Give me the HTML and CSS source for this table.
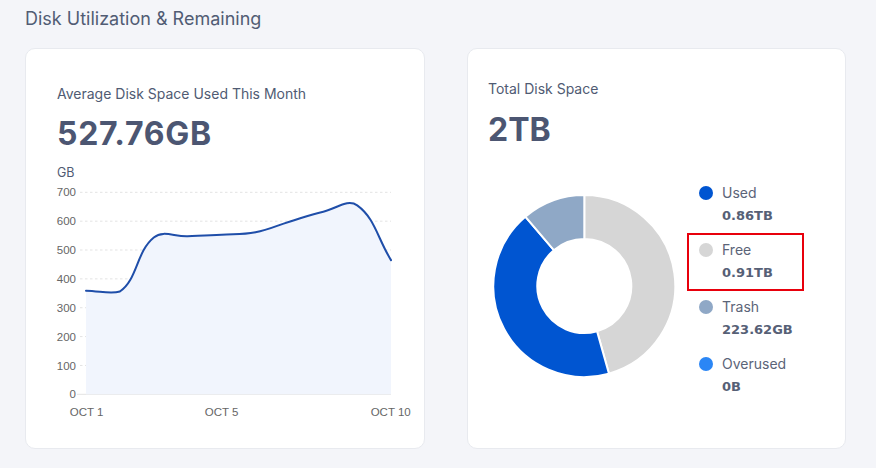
FILE: index.html
```html
<!DOCTYPE html>
<html lang="en">
<head>
<meta charset="utf-8">
<title>Disk Utilization &amp; Remaining</title>
<link rel="stylesheet" href="styles.css">
</head>
<body>
<div class="page">
  <h1 class="section-title">Disk Utilization &amp; Remaining</h1>
  <div class="cards">
    <section class="card card-usage">
      <div class="card-label">Average Disk Space Used This Month</div>
      <div class="card-value">527.76GB</div>
      <svg class="line-chart" width="368" height="270" viewBox="0 0 368 270">
        <text class="unit" x="0" y="17">GB</text>
        <g class="grid">
          <line x1="23" y1="32.3" x2="334" y2="32.3"/>
          <line x1="23" y1="61.16" x2="334" y2="61.16"/>
          <line x1="23" y1="90.01" x2="334" y2="90.01"/>
          <line x1="23" y1="118.87" x2="334" y2="118.87"/>
          <line x1="23" y1="147.73" x2="334" y2="147.73"/>
          <line x1="23" y1="176.59" x2="334" y2="176.59"/>
          <line x1="23" y1="205.44" x2="334" y2="205.44"/>
        </g>
        <line class="zero-tick" x1="20" y1="234.3" x2="334" y2="234.3"/>
        <g class="y-labels">
          <text x="19" y="36.4">700</text>
          <text x="19" y="65.3">600</text>
          <text x="19" y="94.1">500</text>
          <text x="19" y="123">400</text>
          <text x="19" y="151.8">300</text>
          <text x="19" y="180.7">200</text>
          <text x="19" y="209.5">100</text>
          <text x="19" y="238.4">0</text>
        </g>
        <path class="area" d="M29,130.7 C42.56,130.9 53.48,134.5 62.9,131.5 C80.6,119.5 79.1,91.94 96.8,77.5 C106.22,69.82 117.14,76.76 130.7,76.2 C144.26,75.64 151.06,75.48 164.6,74.7 C178.18,73.92 185.24,74.84 198.5,72.3 C212.36,69.64 218.81,65.83 232.4,61.7 C245.93,57.59 252.57,55 266.3,51.7 C279.69,48.48 290.75,38.64 300.2,45.4 C317.83,58 320.48,78.22 334,100.1 L334,234.3 L29,234.3 Z"/>
        <path class="line" d="M29,130.7 C42.56,130.9 53.48,134.5 62.9,131.5 C80.6,119.5 79.1,91.94 96.8,77.5 C106.22,69.82 117.14,76.76 130.7,76.2 C144.26,75.64 151.06,75.48 164.6,74.7 C178.18,73.92 185.24,74.84 198.5,72.3 C212.36,69.64 218.81,65.83 232.4,61.7 C245.93,57.59 252.57,55 266.3,51.7 C279.69,48.48 290.75,38.64 300.2,45.4 C317.83,58 320.48,78.22 334,100.1"/>
        <g class="x-labels">
          <text x="29.7" y="256">OCT 1</text>
          <text x="164.7" y="256">OCT 5</text>
          <text x="333.7" y="256">OCT 10</text>
        </g>
      </svg>
    </section>
    <section class="card card-total">
      <div class="card-label">Total Disk Space</div>
      <div class="card-value">2TB</div>
      <div class="total-body">
        <svg class="donut" width="192" height="200" viewBox="0 0 192 200">
          <path class="seg seg-free" d="M96.3,9 A91,91 0 0 1 120.92,187.6 L109.02,145.25 A47,47 0 0 0 96.3,53 Z"/>
          <path class="seg seg-used" d="M120.92,187.6 A91,91 0 0 1 37.32,30.7 L65.84,64.21 A47,47 0 0 0 109.02,145.25 Z"/>
          <path class="seg seg-trash" d="M37.32,30.7 A91,91 0 0 1 96.3,9 L96.3,53 A47,47 0 0 0 65.84,64.21 Z"/>
        </svg>
        <ul class="legend">
          <li class="legend-item">
            <div class="legend-head"><span class="dot dot-used"></span><span class="legend-name">Used</span></div>
            <div class="legend-value">0.86TB</div>
          </li>
          <li class="legend-item legend-item-marked">
            <div class="legend-head"><span class="dot dot-free"></span><span class="legend-name">Free</span></div>
            <div class="legend-value">0.91TB</div>
          </li>
          <li class="legend-item">
            <div class="legend-head"><span class="dot dot-trash"></span><span class="legend-name">Trash</span></div>
            <div class="legend-value">223.62GB</div>
          </li>
          <li class="legend-item">
            <div class="legend-head"><span class="dot dot-over"></span><span class="legend-name">Overused</span></div>
            <div class="legend-value">0B</div>
          </li>
        </ul>
      </div>
    </section>
  </div>
</div>
</body>
</html>
```
FILE: styles.css
```css
* { box-sizing: border-box; }
html, body { margin: 0; padding: 0; }
body {
  background: #f4f5f9;
  font-family: Inter, "Noto Sans", "Liberation Sans", sans-serif;
  color: #505b73;
  width: 876px;
  height: 468px;
  overflow: hidden;
}
.page {
  padding: 8px 30px 0 25px;
}
.section-title {
  margin: 0;
  font-size: 18px;
  line-height: 22px;
  font-weight: 400;
  color: #515c74;
}
.cards {
  margin-top: 18px;
  display: grid;
  grid-template-columns: 400px 379px;
  column-gap: 42px;
}
.card {
  height: 401px;
  background: #ffffff;
  border: 1px solid #e8eaef;
  border-radius: 10px;
  display: flex;
  flex-direction: column;
  align-items: flex-start;
}
.card-usage { padding: 36px 0 0 31px; }
.card-total { padding: 31px 0 0 20px; }
.card-label {
  font-size: 14px;
  line-height: 18px;
  color: #505b73;
}
.card-value {
  margin-top: 11px;
  font-size: 32px;
  line-height: 40px;
  font-weight: 700;
  color: #4c5672;
}
.card-usage .card-value { letter-spacing: 0.7px; }
.card-total .card-value { margin-top: 12px; }
.line-chart {
  display: block;
  margin-top: 6px;
  overflow: visible;
}
.line-chart .unit {
  font-family: Inter, "Liberation Sans", sans-serif;
  font-size: 12.5px;
  fill: #505b73;
}
.grid line {
  stroke: #e3e3e3;
  stroke-width: 1;
  stroke-dasharray: 2.5 2.5;
}
.zero-tick {
  stroke: #e3e3e3;
  stroke-width: 1;
}
.y-labels text {
  font-family: "Liberation Sans", Arial, sans-serif;
  font-size: 11.5px;
  fill: #666666;
  text-anchor: end;
}
.x-labels text {
  font-family: "Liberation Sans", Arial, sans-serif;
  font-size: 11.5px;
  fill: #666666;
  text-anchor: middle;
}
.area { fill: #f1f5fd; stroke: none; }
.line {
  fill: none;
  stroke: #1f4ea9;
  stroke-width: 2;
  stroke-linejoin: round;
  stroke-linecap: round;
}
.total-body {
  margin-top: 34px;
  display: flex;
  align-items: flex-start;
}
.donut {
  display: block;
  margin-top: 2px;
}
.seg { stroke: #ffffff; stroke-width: 2; stroke-linejoin: miter; }
.seg-free { fill: #d6d6d6; }
.seg-used { fill: #0055d1; }
.seg-trash { fill: #8fa8c6; }
.legend {
  list-style: none;
  margin: 0 0 0 19px;
  padding: 0;
  display: flex;
  flex-direction: column;
  gap: 16.5px;
}
.legend-item {
  position: relative;
}
.legend-item-marked::after {
  content: "";
  position: absolute;
  left: -12.3px;
  top: -8.3px;
  width: 113.3px;
  height: 54px;
  border: 2px solid #e8000c;
  pointer-events: none;
}
.legend-head {
  display: flex;
  align-items: center;
  gap: 9px;
  height: 18px;
}
.dot {
  width: 14px;
  height: 14px;
  border-radius: 50%;
  flex: none;
}
.dot-used { background: #0055d1; }
.dot-free { background: #d6d6d6; }
.dot-trash { background: #8fa8c6; }
.dot-over { background: #2b86f5; }
.legend-name {
  font-size: 14px;
  line-height: 18px;
  color: #5b6478;
}
.legend-value {
  margin-top: 4.5px;
  padding-left: 23px;
  font-family: "DejaVu Sans", "Liberation Sans", sans-serif;
  font-weight: 700;
  font-size: 13px;
  line-height: 18px;
  color: #566076;
}
```
